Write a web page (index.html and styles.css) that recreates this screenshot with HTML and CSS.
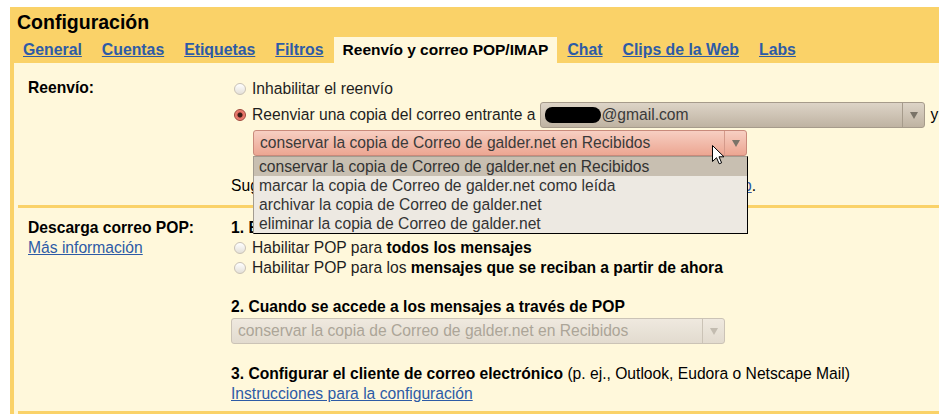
FILE: index.html
```html
<!DOCTYPE html>
<html lang="es">
<head>
  <meta charset="UTF-8" />
  <title>Configuración</title>
  <link rel="stylesheet" href="styles.css">
</head>
<body>
  <div class="settings">
    <h1 class="settings-title">Configuración</h1>
    <nav class="tabs">
      <a class="tab" href="#">General</a>
      <a class="tab" href="#">Cuentas</a>
      <a class="tab" href="#">Etiquetas</a>
      <a class="tab" href="#">Filtros</a>
      <span class="tab tab-active">Reenvío y correo POP/IMAP</span>
      <a class="tab" href="#">Chat</a>
      <a class="tab" href="#">Clips de la Web</a>
      <a class="tab" href="#">Labs</a>
    </nav>

    <div class="panel">
      <!-- Reenvío -->
      <section class="setting setting-fwd">
        <div class="setting-label">Reenvío:</div>
        <div class="setting-body">
          <label class="opt opt-first"><span class="radio"></span>Inhabilitar el reenvío</label>
          <div class="opt opt-fwd">
            <span class="radio radio-on"></span>
            <span>Reenviar una copia del correo entrante a</span>
            <div class="select select-mail">
              <span class="select-text"><span class="redact"></span>@gmail.com</span>
              <span class="select-arrow"><i></i></span>
            </div>
            <span class="after">y</span>
          </div>
          <div class="fwd-action">
            <div class="select select-hot">
              <span class="select-text">conservar la copia de Correo de galder.net en Recibidos</span>
              <span class="select-arrow"><i></i></span>
            </div>
            <ul class="dropdown">
              <li class="dropdown-item is-current">conservar la copia de Correo de galder.net en Recibidos</li>
              <li class="dropdown-item">marcar la copia de Correo de galder.net como leída</li>
              <li class="dropdown-item">archivar la copia de Correo de galder.net</li>
              <li class="dropdown-item">eliminar la copia de Correo de galder.net</li>
            </ul>
            <svg class="cursor" width="13" height="20" viewBox="0 0 13 20">
              <path d="M0.5 0.5 L0.5 16.5 L4.5 12.7 L7.2 18.8 L9.6 17.8 L7 11.8 L12 11.8 Z" fill="#fff" stroke="#000" stroke-width="1"/>
            </svg>
          </div>
          <p class="tip">Sugerencia: también puedes reenviar solo parte del correo si creas un <a class="link" href="#">filtro</a>.</p>
        </div>
      </section>

      <!-- Descarga correo POP -->
      <section class="setting setting-pop">
        <div class="setting-label">
          Descarga correo POP:<br>
          <a class="link label-link" href="#">Más información</a>
        </div>
        <div class="setting-body">
          <div class="step">1. Estado: POP está inhabilitado</div>
          <label class="opt"><span class="radio"></span>Habilitar POP para&nbsp;<b>todos los mensajes</b></label>
          <label class="opt"><span class="radio"></span>Habilitar POP para los&nbsp;<b>mensajes que se reciban a partir de ahora</b></label>
          <div class="step step-gap">2. Cuando se accede a los mensajes a través de POP</div>
          <div class="select select-off">
            <span class="select-text">conservar la copia de Correo de galder.net en Recibidos</span>
            <span class="select-arrow"><i></i></span>
          </div>
          <div class="step step-gap-3">3. Configurar el cliente de correo electrónico <span class="plain">(p. ej., Outlook, Eudora o Netscape Mail)</span></div>
          <a class="link" href="#">Instrucciones para la configuración</a>
        </div>
      </section>
    </div>
  </div>
</body>
</html>
```

FILE: styles.css
```css
html {
  overflow: hidden;
}

body {
  margin: 0;
  padding: 7px 0 0 10px;
  background-color: #fff;
  font-family: "Liberation Sans", Arial, sans-serif;
  font-size: 15.65px;
  color: #1e1e1e;
}

.settings {
  width: 980px;
  background-color: #fad268;
}

.settings-title {
  margin: 0;
  padding-left: 7px;
  font-size: 19.5px;
  line-height: 30px;
  color: #000;
}

/* tabs */
.tabs {
  display: flex;
  height: 26px;
  padding-left: 3px;
}

.tab {
  padding: 0 10px;
  line-height: 26px;
  font-size: 15.8px;
  font-weight: bold;
  color: #2d5ba6;
  text-decoration: underline;
}

.tab-active {
  font-size: 15.5px;
  color: #000;
  text-decoration: none;
  background-color: #fff8db;
  padding: 0 9px;
}

.panel {
  margin-left: 4px;
  background-color: #fff8db;
}

/* setting rows */
.setting {
  display: flex;
  margin-left: 4px;
  padding-left: 10px;
  border-bottom: 3px solid #fad268;
}

.setting-fwd {
  padding-top: 15px;
  padding-bottom: 9px;
}

.setting-pop {
  padding-top: 10px;
  padding-bottom: 7px;
  line-height: 20px;
}

.setting-label {
  width: 203px;
  flex: none;
  font-weight: bold;
  color: #000;
  line-height: 20px;
}

.label-link {
  font-weight: normal;
}

.setting-body {
  flex: 1;
}

.link {
  color: #2d5ba6;
  text-decoration: underline;
}

.opt {
  display: flex;
  align-items: center;
  height: 20px;
  color: #1e1e1e;
}

.opt-first {
  height: 22px;
}

.opt b {
  color: #000;
}

.opt-fwd {
  height: 30px;
}

.radio {
  width: 10px;
  height: 10px;
  margin: 0 6px 0 3px;
  border: 1px solid #c9c2b6;
  border-radius: 50%;
  background: linear-gradient(#ffffff, #e4e0d8);
  flex: none;
}

.radio-on {
  border-color: #9e4438;
  background: radial-gradient(circle, #3b1d17 0, #3b1d17 2px, #e56d60 3px, #f29b8e 100%);
}

/* select boxes */
.select {
  display: flex;
  height: 24px;
  border: 1px solid #a69b8b;
  border-radius: 3px;
  background: linear-gradient(#ddd4c7, #bfb3a2);
  color: #3a3a3a;
  box-sizing: content-box;
}

.select-text {
  flex: 1;
  padding-left: 6px;
  line-height: 24px;
  white-space: nowrap;
  overflow: hidden;
}

.select-arrow {
  width: 21px;
  flex: none;
  border-left: 1px solid #a69b8b;
  display: flex;
  align-items: center;
  justify-content: center;
}

.select-arrow i {
  width: 0;
  height: 0;
  border-left: 4px solid transparent;
  border-right: 4px solid transparent;
  border-top: 7px solid #7a7368;
}

.select-mail {
  width: 383px;
  margin-left: 5px;
}

.redact {
  display: inline-block;
  width: 56px;
  height: 16px;
  margin-left: -2px;
  vertical-align: -3px;
  border-radius: 8px 9px 9px 8px;
  background-color: #000;
}

.after {
  margin-left: 5px;
  color: #000;
}

.fwd-action {
  position: relative;
  width: 494px;
  margin-left: 22px;
}

.select-hot {
  border-color: #c98a7b;
  background: linear-gradient(#f7cfc2, #eca692);
}

.select-hot .select-arrow {
  border-left-color: #d49a8b;
}

.dropdown {
  position: absolute;
  top: 26px;
  left: 0;
  width: 493px;
  margin: 0;
  padding: 0;
  list-style: none;
  border: 1px solid #a39c90;
  border-right-color: #000;
  border-bottom-color: #000;
  background-color: #ede9e2;
  z-index: 2;
}

.dropdown-item {
  height: 19px;
  line-height: 19px;
  padding-left: 5px;
  color: #333;
  white-space: nowrap;
}

.is-current {
  background-color: #c8bfb1;
}

.cursor {
  position: absolute;
  left: 459px;
  top: 15px;
  z-index: 3;
}

.tip {
  margin: 20px 0 0;
  line-height: 20px;
  white-space: nowrap;
  color: #000;
}

/* POP steps */
.step {
  font-weight: bold;
  color: #000;
}

.step-gap {
  margin-top: 19px;
}

.step-gap-3 {
  margin-top: 20px;
}

.plain {
  font-weight: normal;
}

.select-off {
  width: 492px;
  margin-top: 1px;
  border-color: #cbc3b6;
  background: linear-gradient(#efe9df, #e2dbcf);
  color: #aca598;
}

.select-off .select-arrow {
  border-left-color: #cbc3b6;
}

.select-off .select-arrow i {
  border-top-color: #c3bcb0;
}
```
